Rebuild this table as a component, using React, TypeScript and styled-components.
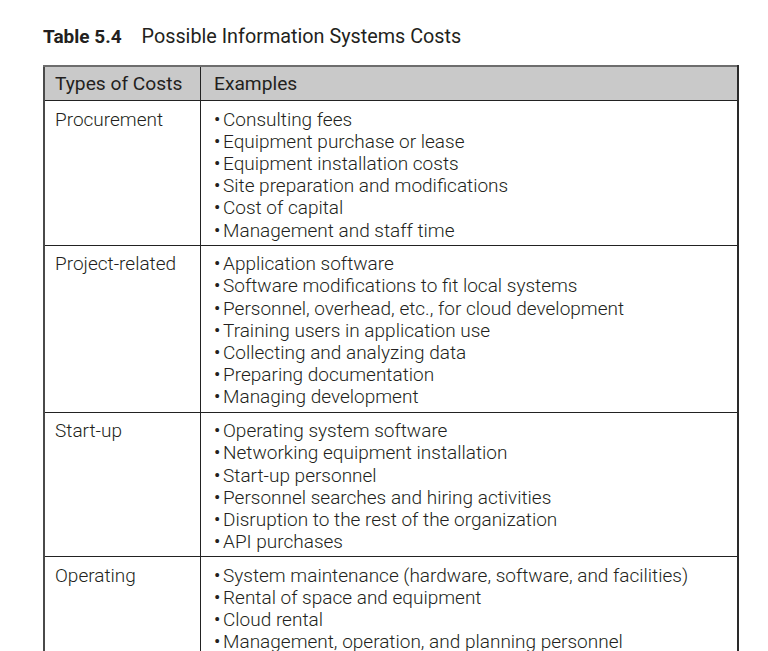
import React from "react";
import styled, { createGlobalStyle } from "styled-components";

const Global = createGlobalStyle`
  html, body { margin: 0; padding: 0; background: #ffffff; }
  body { font-family: Roboto, "Noto Sans", "Liberation Sans", sans-serif; color: #231f20; }
`;

const Page = styled.div`
  width: 768px;
  height: 651px;
  overflow: hidden;
  padding: 25px 0 0 43px;
  box-sizing: border-box;
`;

const Title = styled.h1`
  margin: 0 0 17px 0;
  font-size: 19.8px;
  line-height: 23px;
  font-weight: 400;
  color: #231f20;
  display: flex;
  gap: 20px;
`;

const Label = styled.span`
  font-weight: 700;
  font-size: 19px;
`;

const Table = styled.table`
  width: 696px;
  border-collapse: collapse;
  border-top: 2px solid #6d6d6d;
  border-left: 2px solid #4a4a4a;
  border-right: 2px solid #2a2a2a;
  table-layout: fixed;
`;

const HeadCell = styled.th<{ $first?: boolean }>`
  background: #c9c9c9;
  text-align: left;
  font-weight: 400;
  font-size: 19.2px;
  line-height: 22px;
  padding: 6px 12px 5px ${(p) => (p.$first ? "10px" : "13px")};
  width: ${(p) => (p.$first ? "133px" : "auto")};
  border-right: ${(p) => (p.$first ? "1.5px solid #222" : "none")};
  border-bottom: 1.5px solid #222;
  color: #231f20;
`;

const Row = styled.tr`
  border-bottom: 1.5px solid #222;
`;

const TypeCell = styled.td`
  vertical-align: top;
  padding: 7.5px 12px 3px 10px;
  font-size: 19px;
  font-weight: 300;
  line-height: 22.2px;
  border-right: 1.5px solid #222;
  color: #231f20;
`;

const ExampleCell = styled.td`
  vertical-align: top;
  padding: 7.5px 12px 3px 13px;
`;

const List = styled.ul`
  list-style: none;
  margin: 0;
  padding: 0;
`;

const Item = styled.li`
  display: flex;
  font-size: 19px;
  font-weight: 300;
  line-height: 22.2px;
  color: #231f20;
  white-space: nowrap;
`;

const Bullet = styled.span`
  width: 9px;
  flex: none;
  font-weight: 400;
`;

const rows: { type: string; items: string[] }[] = [
  {
    type: "Procurement",
    items: [
      "Consulting fees",
      "Equipment purchase or lease",
      "Equipment installation costs",
      "Site preparation and modifications",
      "Cost of capital",
      "Management and staff time",
    ],
  },
  {
    type: "Project-related",
    items: [
      "Application software",
      "Software modifications to fit local systems",
      "Personnel, overhead, etc., for cloud development",
      "Training users in application use",
      "Collecting and analyzing data",
      "Preparing documentation",
      "Managing development",
    ],
  },
  {
    type: "Start-up",
    items: [
      "Operating system software",
      "Networking equipment installation",
      "Start-up personnel",
      "Personnel searches and hiring activities",
      "Disruption to the rest of the organization",
      "API purchases",
    ],
  },
  {
    type: "Operating",
    items: [
      "System maintenance (hardware, software, and facilities)",
      "Rental of space and equipment",
      "Cloud rental",
      "Management, operation, and planning personnel",
    ],
  },
];

export default function App() {
  return (
    <>
      <Global />
      <Page>
        <Title>
          <Label>Table 5.4</Label>
          <span>Possible Information Systems Costs</span>
        </Title>
        <Table>
          <thead>
            <tr>
              <HeadCell $first>Types of Costs</HeadCell>
              <HeadCell>Examples</HeadCell>
            </tr>
          </thead>
          <tbody>
            {rows.map((r) => (
              <Row key={r.type}>
                <TypeCell>{r.type}</TypeCell>
                <ExampleCell>
                  <List>
                    {r.items.map((it) => (
                      <Item key={it}>
                        <Bullet>•</Bullet>
                        {it}
                      </Item>
                    ))}
                  </List>
                </ExampleCell>
              </Row>
            ))}
          </tbody>
        </Table>
      </Page>
    </>
  );
}
